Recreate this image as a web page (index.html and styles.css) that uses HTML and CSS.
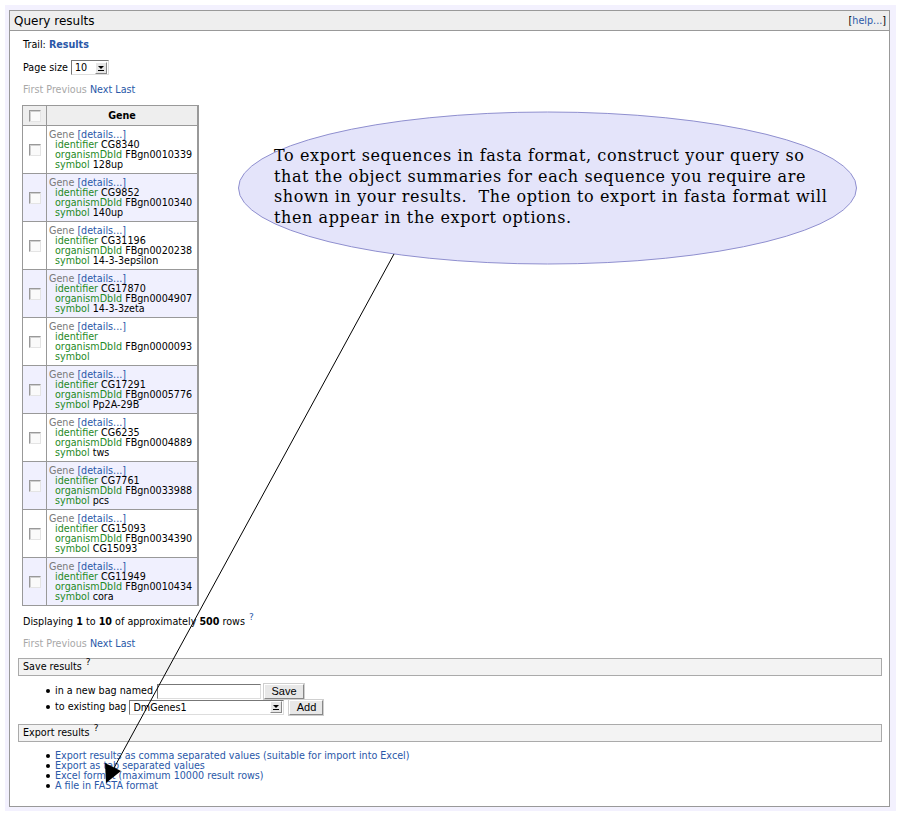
FILE: index.html
```html
<!DOCTYPE html>
<html>
<head>
<meta charset="utf-8">
<title>Query results</title>
<link rel="stylesheet" href="styles.css">
</head>
<body>
<div class="frame">
  <div class="box">
    <div class="box-head">
      <span class="title">Query results</span>
      <span class="help">[<a href="#">help...</a>]</span>
    </div>
    <div class="box-body">
      <div class="trail">Trail: <a href="#" class="bold">Results</a></div>
      <div class="pagesize">
        <span>Page size</span>
        <span class="select select-small"><span class="sel-val">10</span><span class="sel-btn"><span class="tri"></span></span></span>
      </div>
      <div class="pager"><span class="dim">First</span> <span class="dim">Previous</span> <a href="#">Next</a> <a href="#">Last</a></div>

      <table class="results">
        <thead>
          <tr><th class="cbcol"><span class="cb"></span></th><th class="gene-head">Gene</th></tr>
        </thead>
        <tbody>
          <tr><td class="cbcol"><span class="cb"></span></td><td><div class="obj">Gene <a href="#">[details...]</a></div><div class="f"><span class="k">identifier</span> CG8340</div><div class="f"><span class="k">organismDbId</span> FBgn0010339</div><div class="f"><span class="k">symbol</span> 128up</div></td></tr>
          <tr class="alt"><td class="cbcol"><span class="cb"></span></td><td><div class="obj">Gene <a href="#">[details...]</a></div><div class="f"><span class="k">identifier</span> CG9852</div><div class="f"><span class="k">organismDbId</span> FBgn0010340</div><div class="f"><span class="k">symbol</span> 140up</div></td></tr>
          <tr><td class="cbcol"><span class="cb"></span></td><td><div class="obj">Gene <a href="#">[details...]</a></div><div class="f"><span class="k">identifier</span> CG31196</div><div class="f"><span class="k">organismDbId</span> FBgn0020238</div><div class="f"><span class="k">symbol</span> 14-3-3epsilon</div></td></tr>
          <tr class="alt"><td class="cbcol"><span class="cb"></span></td><td><div class="obj">Gene <a href="#">[details...]</a></div><div class="f"><span class="k">identifier</span> CG17870</div><div class="f"><span class="k">organismDbId</span> FBgn0004907</div><div class="f"><span class="k">symbol</span> 14-3-3zeta</div></td></tr>
          <tr><td class="cbcol"><span class="cb"></span></td><td><div class="obj">Gene <a href="#">[details...]</a></div><div class="f"><span class="k">identifier</span></div><div class="f"><span class="k">organismDbId</span> FBgn0000093</div><div class="f"><span class="k">symbol</span></div></td></tr>
          <tr class="alt"><td class="cbcol"><span class="cb"></span></td><td><div class="obj">Gene <a href="#">[details...]</a></div><div class="f"><span class="k">identifier</span> CG17291</div><div class="f"><span class="k">organismDbId</span> FBgn0005776</div><div class="f"><span class="k">symbol</span> Pp2A-29B</div></td></tr>
          <tr><td class="cbcol"><span class="cb"></span></td><td><div class="obj">Gene <a href="#">[details...]</a></div><div class="f"><span class="k">identifier</span> CG6235</div><div class="f"><span class="k">organismDbId</span> FBgn0004889</div><div class="f"><span class="k">symbol</span> tws</div></td></tr>
          <tr class="alt"><td class="cbcol"><span class="cb"></span></td><td><div class="obj">Gene <a href="#">[details...]</a></div><div class="f"><span class="k">identifier</span> CG7761</div><div class="f"><span class="k">organismDbId</span> FBgn0033988</div><div class="f"><span class="k">symbol</span> pcs</div></td></tr>
          <tr><td class="cbcol"><span class="cb"></span></td><td><div class="obj">Gene <a href="#">[details...]</a></div><div class="f"><span class="k">identifier</span> CG15093</div><div class="f"><span class="k">organismDbId</span> FBgn0034390</div><div class="f"><span class="k">symbol</span> CG15093</div></td></tr>
          <tr class="alt"><td class="cbcol"><span class="cb"></span></td><td><div class="obj">Gene <a href="#">[details...]</a></div><div class="f"><span class="k">identifier</span> CG11949</div><div class="f"><span class="k">organismDbId</span> FBgn0010434</div><div class="f"><span class="k">symbol</span> cora</div></td></tr>
        </tbody>
      </table>

      <div class="displaying">Displaying <b>1</b> to <b>10</b> of approximately <b>500</b> rows <sup class="q">?</sup></div>
      <div class="pager pager-bottom"><span class="dim">First</span> <span class="dim">Previous</span> <a href="#">Next</a> <a href="#">Last</a></div>

      <div class="section-bar">Save results <sup class="q q-dark">?</sup></div>
      <ul class="actions">
        <li><span class="lbl">in a new bag named</span><span class="textbox"></span><span class="btn btn-save">Save</span></li>
        <li><span class="lbl">to existing bag</span><span class="select select-bag"><span class="sel-val">DmGenes1</span><span class="sel-btn"><span class="tri"></span></span></span><span class="btn btn-add">Add</span></li>
      </ul>

      <div class="section-bar section-export">Export results <sup class="q q-dark">?</sup></div>
      <ul class="exports">
        <li><a href="#">Export results as comma separated values (suitable for import into Excel)</a></li>
        <li><a href="#">Export as tab separated values</a></li>
        <li><a href="#">Excel format (maximum 10000 result rows)</a></li>
        <li><a href="#">A file in FASTA format</a></li>
      </ul>
    </div>
  </div>
</div>

<div class="callout">
  <svg class="callout-art" width="901" height="814" viewBox="0 0 901 814">
    <ellipse cx="547.5" cy="188" rx="309" ry="76" fill="#e4e4fa" stroke="#8f8fcf" stroke-width="1"/>
    <line x1="394" y1="254" x2="114" y2="768" stroke="#000" stroke-width="1"/>
    <polygon points="106,783 105,763 121,771" fill="#000"/>
  </svg>
  <div class="callout-text">To export sequences in fasta format, construct your query so<br>that the object summaries for each sequence you require are<br>shown in your results.&nbsp; The option to export in fasta format will<br>then appear in the export options.</div>
</div>
</body>
</html>
```
FILE: styles.css
```css
* { box-sizing: border-box; }
body {
  margin: 0;
  background: #fff;
  color: #000;
  font-family: "DejaVu Sans", "Bitstream Vera Sans", sans-serif;
  font-size: 9.6px;
  line-height: 12px;
}
a { color: #2a58a8; text-decoration: none; }
.bold { font-weight: bold; }

.frame {
  margin: 5px;
  padding: 5px 6px 4px 4px;
  background: #f3f1fe;
}
.box {
  border: 1px solid #999;
  background: #fff;
}
.box-head {
  height: 20px;
  background: #eee;
  border-bottom: 1px solid #999;
  display: flex;
  justify-content: space-between;
  align-items: center;
  padding: 0 3px 0 4px;
}
.title { font-size: 12px; }
.help { font-size: 9.6px; }

.box-body { padding: 8px 7px 15px 8px; }

.trail { margin-left: 5px; }
.pagesize {
  margin: 9px 0 0 5px;
  display: flex;
  align-items: center;
  gap: 3px;
}
.pager { margin: 9px 0 0 5px; }
.dim { color: #a8a8a8; }

/* select imitation */
.select {
  display: inline-flex;
  align-items: center;
  height: 15px;
  border: 1px solid;
  border-color: #777 #ddd #ddd #777;
  background: #fff;
}
.select-small { width: 38px; }
.select-bag { width: 155px; }
.sel-val { flex: 1; padding-left: 3px; font-size: 9.6px; line-height: 13px; }
.sel-btn {
  width: 12px;
  height: 12px;
  margin-right: 1px;
  background: #e6e6e6;
  border: 1px solid;
  border-color: #fff #888 #888 #fff;
  position: relative;
}
.tri {
  position: absolute;
  left: 2px;
  top: 3px;
  width: 0;
  height: 0;
  border-left: 3px solid transparent;
  border-right: 3px solid transparent;
  border-top: 3px solid #000;
}
.tri::after {
  content: "";
  position: absolute;
  left: -3px;
  top: 1px;
  width: 6px;
  height: 1px;
  background: #000;
}

/* results table */
.results {
  margin: 9px 0 0 4px;
  width: 177px;
  border-collapse: collapse;
  border: 1px solid #999;
  border-right-width: 2px;
}
.results th, .results td {
  border: 1px solid #999;
  vertical-align: middle;
}
.results thead th {
  background: #eee;
  height: 20px;
  padding: 0;
  font-weight: bold;
}
.cbcol { width: 24px; text-align: center; padding: 0; }
.results td { padding: 4px 0 3px 2px; line-height: 10px; }
.results td.cbcol { padding: 0; }
.results tr.alt td { background: #f0f0fe; }
.cb {
  display: inline-block;
  width: 12px;
  height: 12px;
  vertical-align: middle;
  border: 1px solid;
  border-color: #999 #e4e4e4 #e4e4e4 #999;
  background: #fafafa;
  box-shadow: inset 1px 1px 0 #d0d0d0;
}
.obj { color: #7a7a7a; white-space: nowrap; }
.f { padding-left: 6px; white-space: nowrap; }
.k { color: #1f8a1f; }

.displaying { margin: 10px 0 0 5px; }
.q { color: #2a58a8; font-size: 9px; vertical-align: 5px; line-height: 0; margin-left: 1px; }
.q-dark { color: #000; }
.pager-bottom { margin-top: 10px; }

.section-bar {
  margin-top: 8px;
  height: 18px;
  border: 1px solid #aaa;
  background: #f3f3f3;
  padding-left: 4px;
  line-height: 16px;
}
.section-export { margin-top: 9px; }

ul { list-style: none; margin: 0; padding: 0; }
.actions { margin: 7px 0 0 28px; }
.actions li {
  display: flex;
  align-items: center;
  height: 16px;
}
.actions li::before, .exports li::before {
  content: "";
  width: 4px;
  height: 4px;
  border-radius: 50%;
  background: #000;
  margin-right: 5px;
  flex: none;
}
.lbl { margin-right: 3px; }
.textbox {
  width: 104px;
  height: 15px;
  border: 1px solid;
  border-color: #777 #ddd #ddd #777;
  background: #fff;
}
.btn {
  display: inline-flex;
  align-items: center;
  justify-content: center;
  height: 15px;
  background: #e8e8e8;
  border: 1px solid;
  border-color: #fff #888 #888 #fff;
  box-shadow: 0 0 0 1px #cfcfcf;
  font-family: "Liberation Sans", Arial, sans-serif;
  font-size: 11px;
  color: #000;
}
.btn-save { width: 40px; margin-left: 3px; }
.btn-add { width: 34px; margin-left: 5px; }
.actions li:nth-child(1) .lbl { margin-right: 4px; }
.actions li:nth-child(2) .lbl { margin-right: 3px; }

.exports { margin: 9px 0 0 28px; }
.exports li { display: flex; align-items: center; height: 10px; line-height: 10px; }

/* annotation overlay */
.callout {
  position: absolute;
  left: 0;
  top: 0;
  width: 901px;
  height: 814px;
  pointer-events: none;
}
.callout-art { position: absolute; left: 0; top: 0; }
.callout-text {
  position: absolute;
  left: 274px;
  top: 146px;
  font-family: "DejaVu Serif", serif;
  font-size: 16px;
  letter-spacing: 0.6px;
  line-height: 20.5px;
  white-space: nowrap;
  color: #000;
}
```
